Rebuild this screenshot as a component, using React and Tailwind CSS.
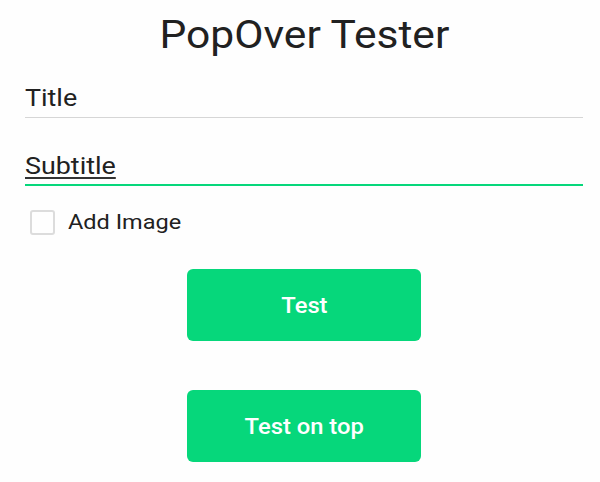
export default function App() {
  return (
    <div className="w-[600px] h-[482px] bg-[#fefefe] overflow-hidden text-[#212121]" style={{ fontFamily: "Roboto, 'Noto Sans', sans-serif" }}>
      <div className="ml-[25px] mr-[17px]">
        <h1 className="pt-[13px] text-center text-[38px] leading-[44px] font-normal">
          <span className="inline-block scale-x-[1.12]">PopOver Tester</span>
        </h1>
        <div className="mt-[24px] h-[37px] border-b border-[#d6d6d6] text-[24px] leading-[34px]">
          <span className="inline-block origin-left scale-x-[1.12]">Title</span>
        </div>
        <div className="mt-[31px] h-[37px] border-b-2 border-[#06d77b] text-[24px] leading-[34px]">
          <span className="inline-block origin-left scale-x-[1.12] underline underline-offset-[3px] decoration-[1.5px] decoration-[#333]">Subtitle</span>
        </div>
        <div className="mt-[23px] ml-[5px] flex items-center h-[26px]">
          <div className="w-[25px] h-[25px] rounded-[3px] border-2 border-[#dcdcdc]" />
          <span className="ml-[13px] text-[21px] leading-[26px] inline-block origin-left scale-x-[1.12]">Add Image</span>
        </div>
        <div className="mt-[34px] flex flex-col items-center gap-[49px]">
          <button className="w-[234px] h-[72px] rounded-[6px] bg-[#06d77b] text-white text-[22px] font-medium">
            <span className="inline-block scale-x-[1.08]">Test</span>
          </button>
          <button className="w-[234px] h-[72px] rounded-[6px] bg-[#06d77b] text-white text-[22px] font-medium">
            <span className="inline-block scale-x-[1.08]">Test on top</span>
          </button>
        </div>
      </div>
    </div>
  );
}
